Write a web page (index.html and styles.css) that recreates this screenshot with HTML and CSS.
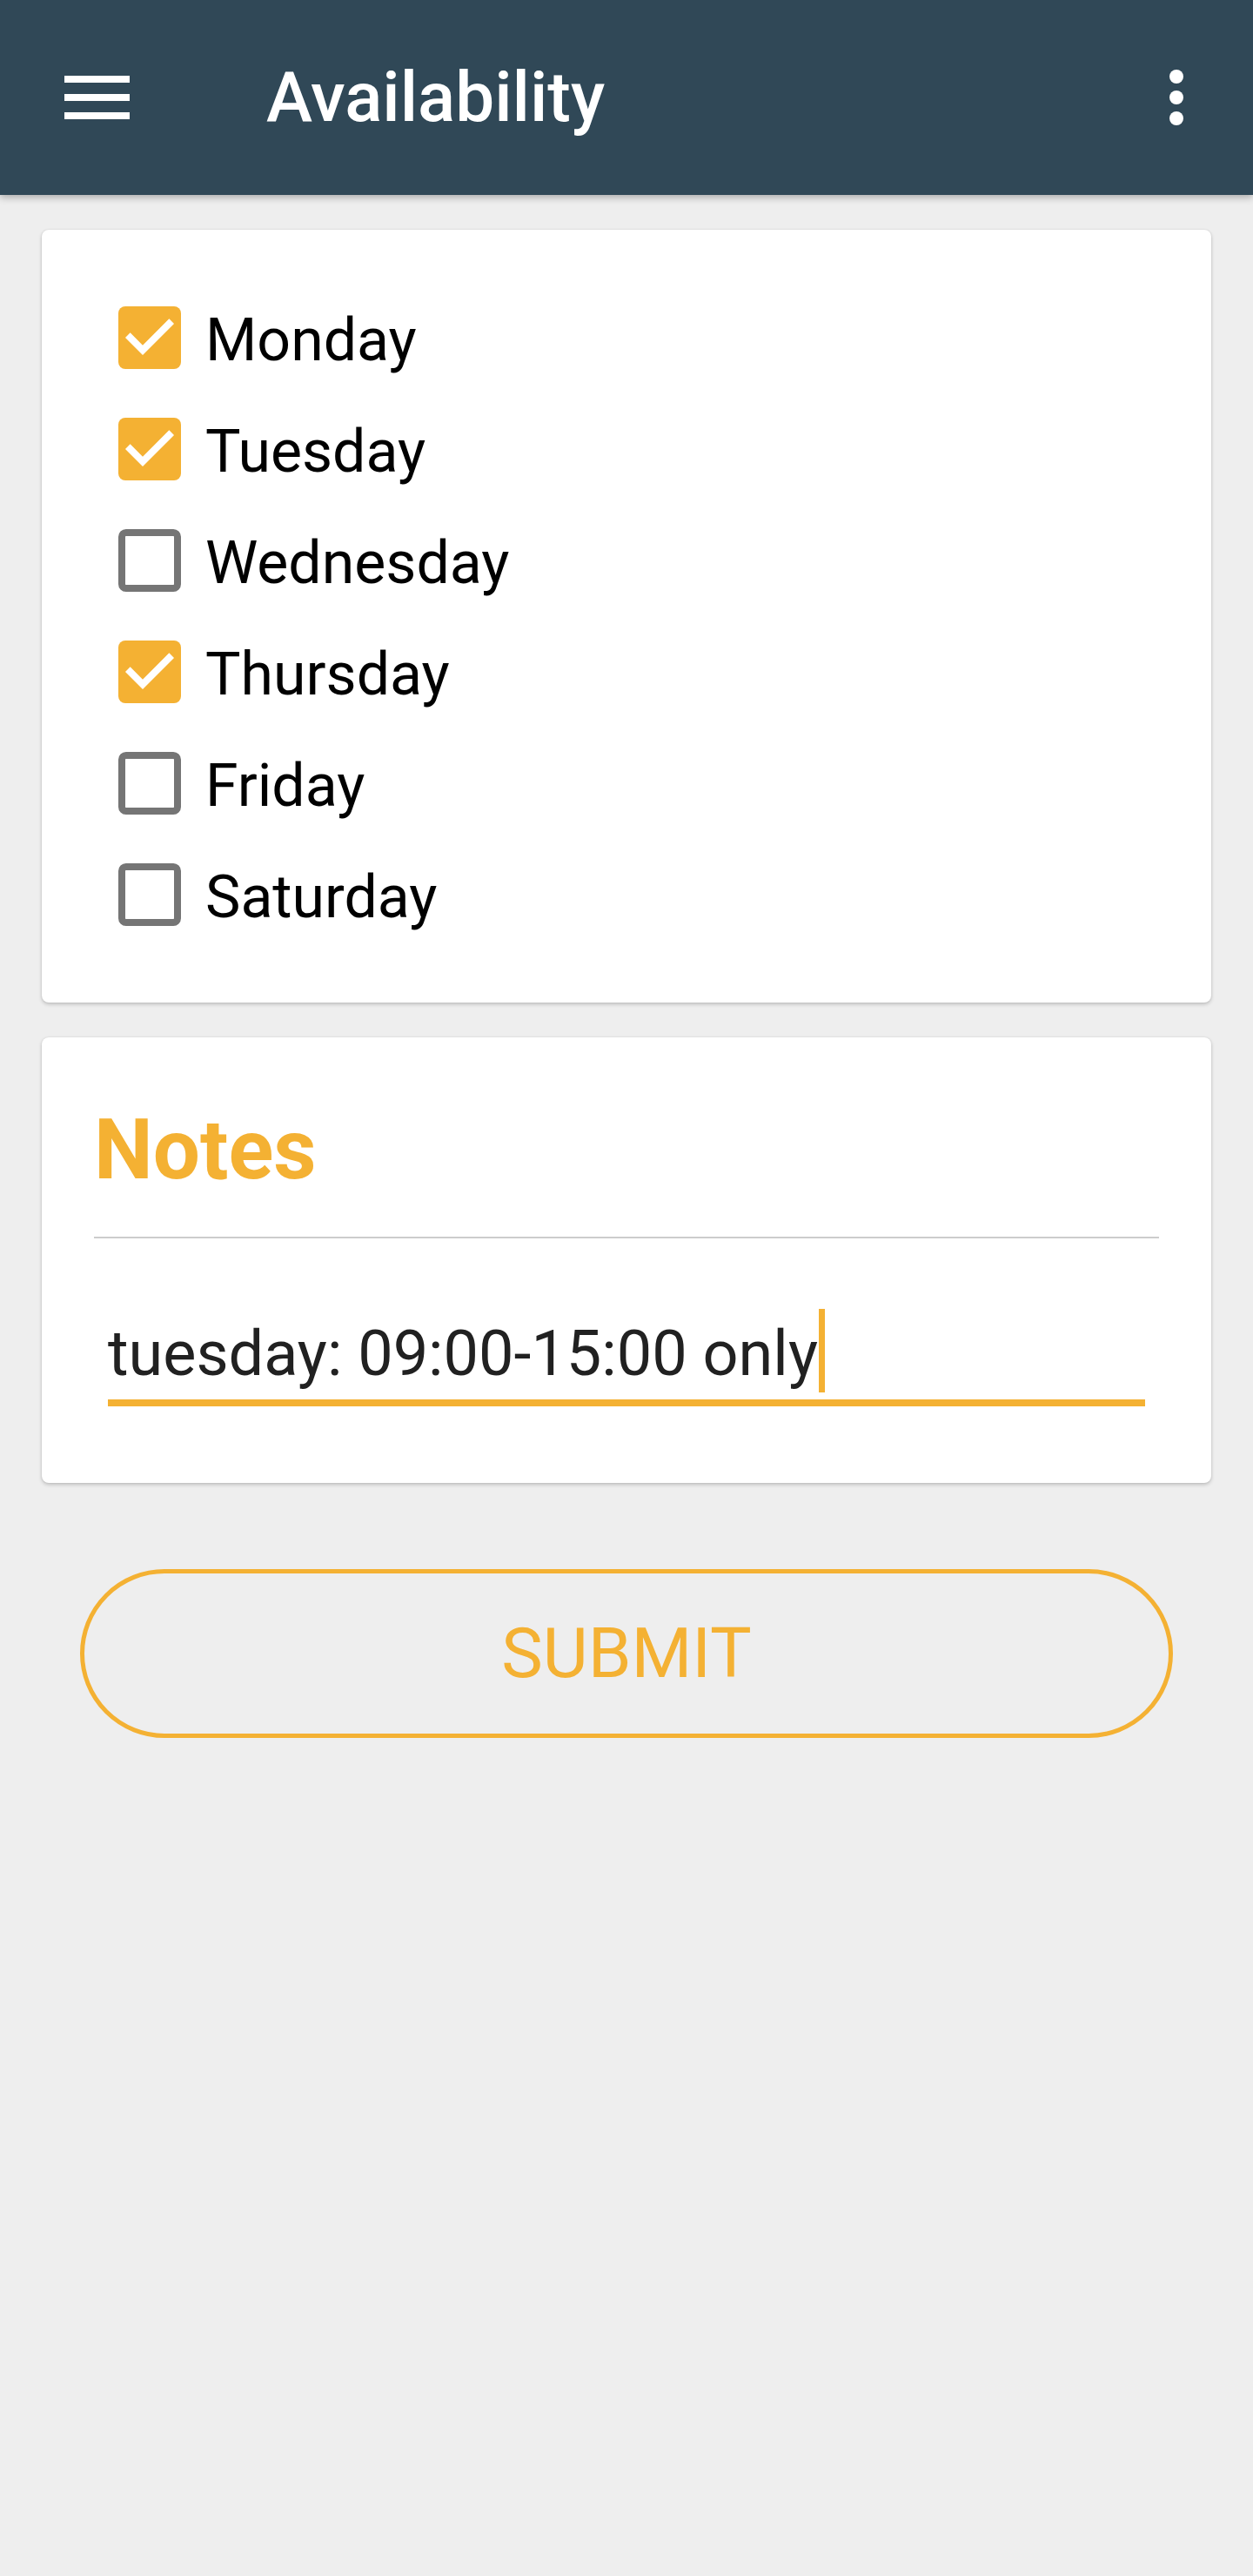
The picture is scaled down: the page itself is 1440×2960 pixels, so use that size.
FILE: index.html
```html
<!DOCTYPE html>
<html lang="en">
<head>
<meta charset="utf-8">
<title>Availability</title>
<link rel="stylesheet" href="styles.css">
</head>
<body>
<header class="appbar">
  <svg class="menu-icon" width="75" height="50" viewBox="0 0 75 50" aria-hidden="true">
    <rect x="0" y="0" width="75" height="8" fill="#fff"/>
    <rect x="0" y="21" width="75" height="8" fill="#fff"/>
    <rect x="0" y="42" width="75" height="8" fill="#fff"/>
  </svg>
  <h1 class="appbar-title">Availability</h1>
  <svg class="more-icon" width="16" height="64" viewBox="0 0 16 64" aria-hidden="true">
    <circle cx="8" cy="8" r="8" fill="#fff"/>
    <circle cx="8" cy="32" r="8" fill="#fff"/>
    <circle cx="8" cy="56" r="8" fill="#fff"/>
  </svg>
</header>

<main class="content">
  <section class="card days">
    <div class="day">
      <svg class="box" width="72" height="72" viewBox="3 3 18 18"><rect x="3" y="3" width="18" height="18" rx="2" class="box-on"/><path d="M10 17l-5-5 1.41-1.41L10 14.17l7.59-7.59L19 8l-9 9z" fill="#fff"/></svg>
      <span class="day-label">Monday</span>
    </div>
    <div class="day">
      <svg class="box" width="72" height="72" viewBox="3 3 18 18"><rect x="3" y="3" width="18" height="18" rx="2" class="box-on"/><path d="M10 17l-5-5 1.41-1.41L10 14.17l7.59-7.59L19 8l-9 9z" fill="#fff"/></svg>
      <span class="day-label">Tuesday</span>
    </div>
    <div class="day">
      <svg class="box" width="72" height="72" viewBox="3 3 18 18"><rect x="4" y="4" width="16" height="16" rx="1.2" class="box-off"/></svg>
      <span class="day-label">Wednesday</span>
    </div>
    <div class="day">
      <svg class="box" width="72" height="72" viewBox="3 3 18 18"><rect x="3" y="3" width="18" height="18" rx="2" class="box-on"/><path d="M10 17l-5-5 1.41-1.41L10 14.17l7.59-7.59L19 8l-9 9z" fill="#fff"/></svg>
      <span class="day-label">Thursday</span>
    </div>
    <div class="day">
      <svg class="box" width="72" height="72" viewBox="3 3 18 18"><rect x="4" y="4" width="16" height="16" rx="1.2" class="box-off"/></svg>
      <span class="day-label">Friday</span>
    </div>
    <div class="day">
      <svg class="box" width="72" height="72" viewBox="3 3 18 18"><rect x="4" y="4" width="16" height="16" rx="1.2" class="box-off"/></svg>
      <span class="day-label">Saturday</span>
    </div>
  </section>

  <section class="card notes">
    <h2 class="notes-title">Notes</h2>
    <div class="divider"></div>
    <div class="notes-input"><span class="notes-text">tuesday: 09:00-15:00 only</span><span class="caret"></span></div>
  </section>

  <div class="actions">
    <button class="submit" type="button">SUBMIT</button>
  </div>
</main>
</body>
</html>
```

FILE: styles.css
```css
* {
  box-sizing: border-box;
}

html, body {
  margin: 0;
  padding: 0;
}

body {
  background: #eeeeee;
  font-family: Roboto, "Noto Sans", "Liberation Sans", sans-serif;
  width: 1440px;
  min-height: 2960px;
}

.appbar {
  height: 224px;
  background: #304857;
  display: flex;
  align-items: center;
  padding: 0 80px 0 74px;
  box-shadow: 0 3px 8px rgba(0, 0, 0, 0.28);
  position: relative;
  z-index: 1;
}

.menu-icon {
  display: block;
  flex: none;
}

.appbar-title {
  margin: 0 0 0 157px;
  font-size: 80px;
  font-weight: 500;
  color: #ffffff;
  flex: 1;
  line-height: normal;
}

.more-icon {
  display: block;
  flex: none;
}

.content {
  padding: 40px 48px;
}

.card {
  background: #ffffff;
  border-radius: 8px;
  box-shadow: 0 2px 4px rgba(0, 0, 0, 0.2), 0 0 2px rgba(0, 0, 0, 0.1);
}

.days {
  padding: 88px 88px;
  display: flex;
  flex-direction: column;
  gap: 56px;
}

.day {
  display: flex;
  align-items: center;
  height: 72px;
}

.box {
  display: block;
  flex: none;
}

.box-on {
  fill: #f4b133;
}

.box-off {
  fill: none;
  stroke: #757575;
  stroke-width: 2;
}

.day-label {
  margin-left: 28px;
  padding-top: 5px;
  font-size: 68px;
  color: #000000;
  line-height: normal;
}

.notes {
  margin-top: 40px;
  padding: 73px 60px 88px;
}

.notes-title {
  margin: 0;
  font-size: 96px;
  font-weight: 700;
  color: #f4b133;
  line-height: 112px;
}

.divider {
  margin-top: 44px;
  height: 2px;
  background: #cccccc;
}

.notes-input {
  margin: 81px 16px 0;
  padding-bottom: 4px;
  border-bottom: 8px solid #f4b133;
  font-size: 72px;
  line-height: 96px;
  color: #212121;
  white-space: nowrap;
}

.caret {
  display: inline-block;
  width: 7px;
  height: 96px;
  background: #f4b133;
  vertical-align: -20px;
  margin-left: 1px;
}

.actions {
  padding: 99px 44px 0;
}

.submit {
  display: block;
  width: 100%;
  height: 194px;
  border: 5px solid #f4b133;
  border-radius: 97px;
  background: transparent;
  color: #f4b133;
  font-family: Roboto, "Noto Sans", "Liberation Sans", sans-serif;
  font-size: 80px;
  font-weight: 400;
  padding: 0;
}
```
